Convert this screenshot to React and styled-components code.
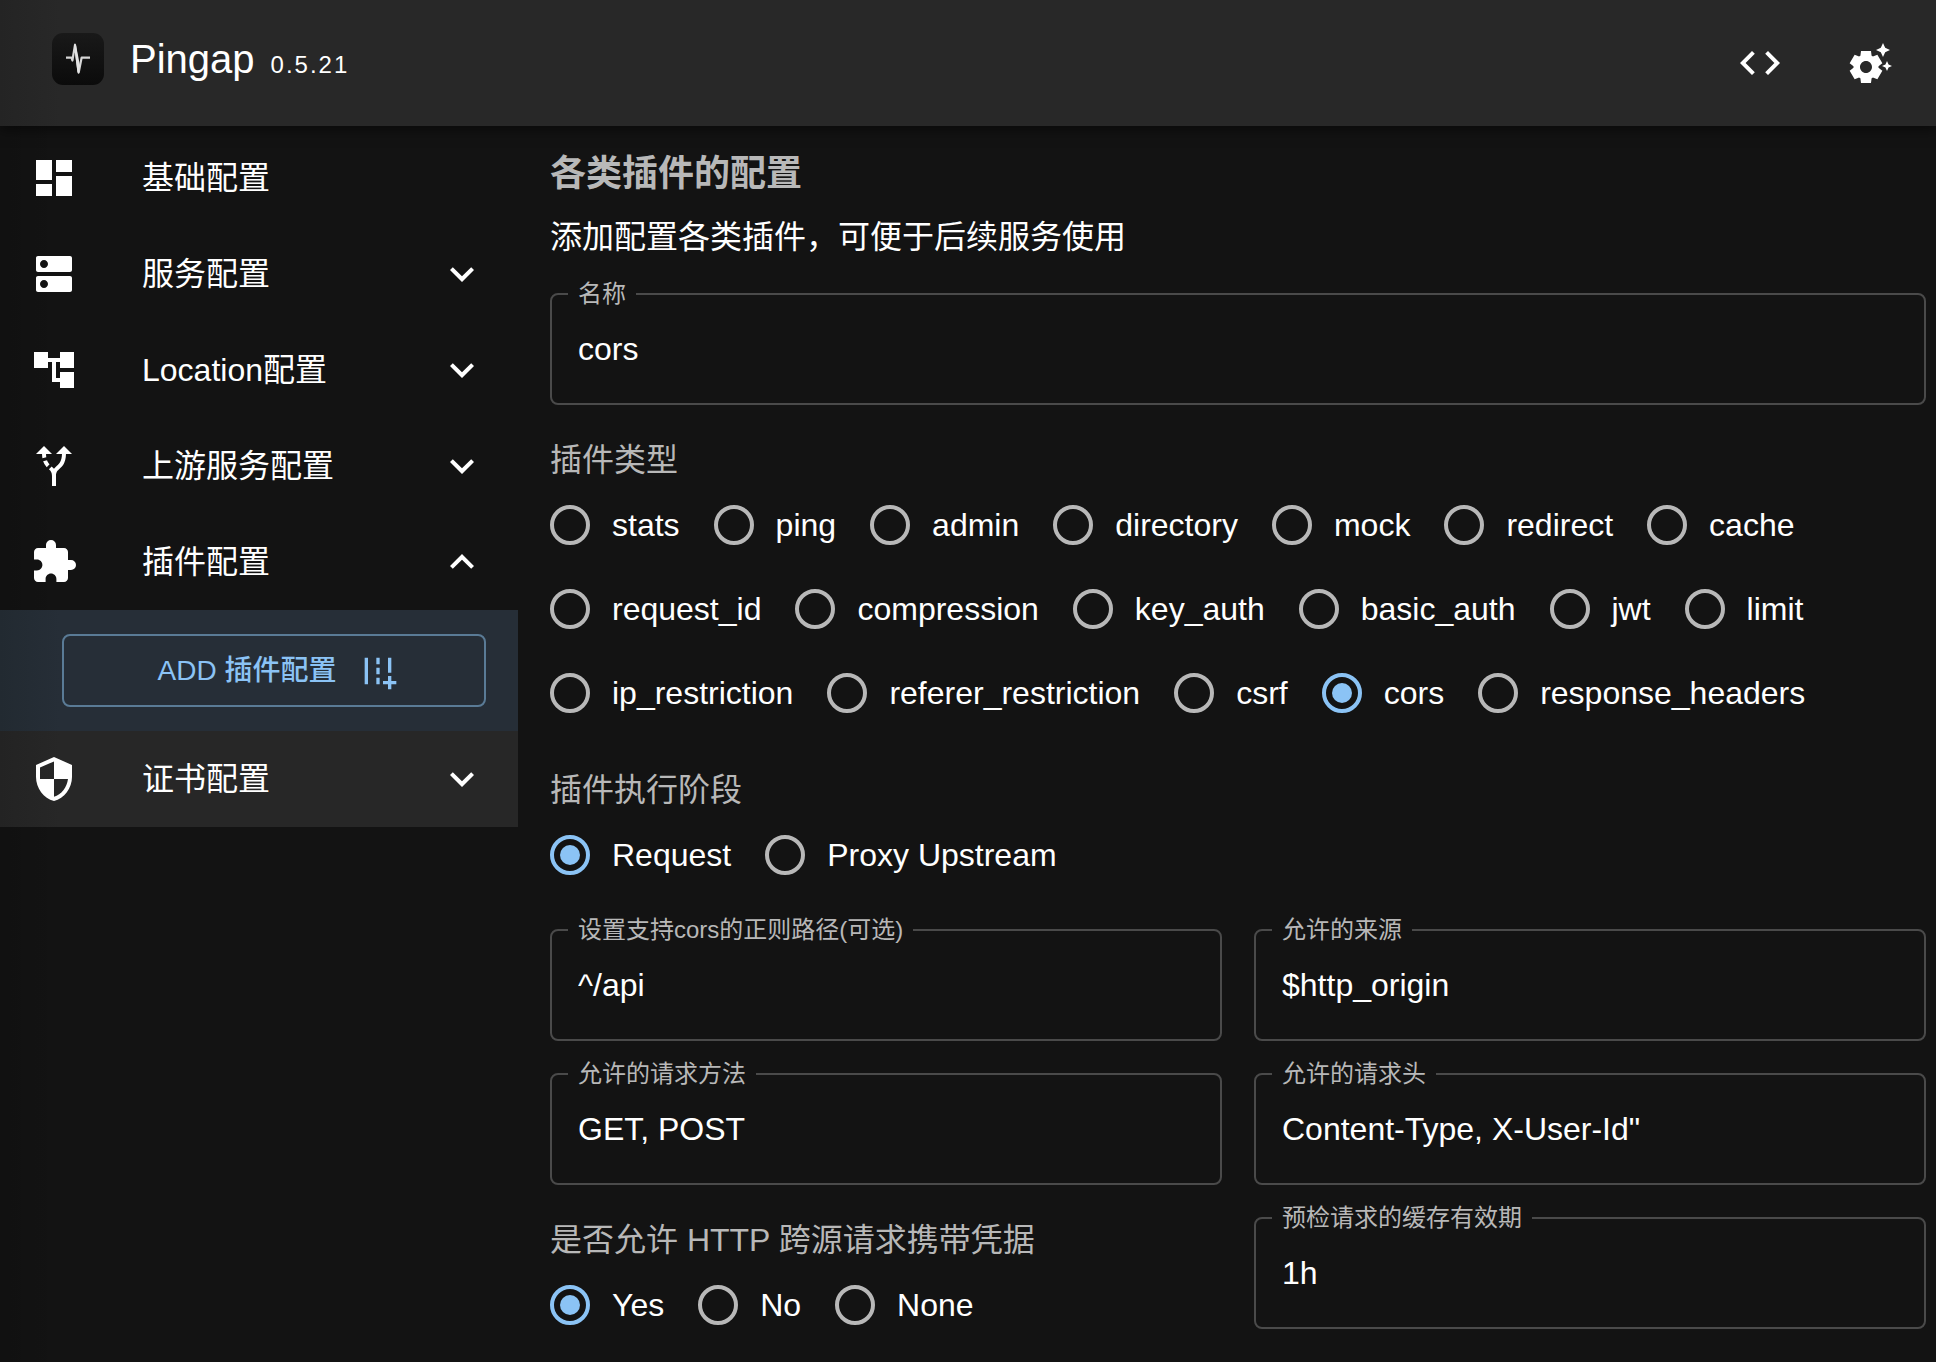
import React, { useState } from "react";
import styled, { createGlobalStyle } from "styled-components";
import {
  MdAccountTree,
  MdAddRoad,
  MdAltRoute,
  MdCode,
  MdDashboard,
  MdDns,
  MdExpandLess,
  MdExpandMore,
  MdExtension,
  MdSecurity,
  MdSettingsSuggest,
} from "react-icons/md";

const GlobalStyle = createGlobalStyle`
  * {
    box-sizing: border-box;
  }
  body {
    margin: 0;
    background: #131313;
    color: #fff;
    font-family: "Liberation Sans", "Noto Sans CJK SC", sans-serif;
    font-size: 32px;
  }
  button,
  input {
    font: inherit;
    color: inherit;
  }
`;

const Page = styled.div`
  min-height: 100vh;
  background: linear-gradient(to right, rgba(0, 0, 0, 0.12), transparent 60px);
`;

const Header = styled.header`
  display: flex;
  align-items: center;
  height: 126px;
  padding: 0 18px 0 52px;
  background: linear-gradient(to right, #242424, #282828 60px);
  box-shadow: 0 4px 12px rgba(0, 0, 0, 0.5);
`;

const Brand = styled.div`
  display: flex;
  flex: 1;
  align-items: center;
  gap: 26px;
  padding-bottom: 8px;
`;

const Logo = styled.svg`
  width: 52px;
  height: 52px;
`;

const Title = styled.h1`
  display: flex;
  align-items: baseline;
  gap: 16px;
  margin: 0;
  padding-top: 6px;
  font-size: 40px;
  font-weight: 400;
  line-height: 52px;
`;

const Version = styled.span`
  font-size: 24px;
  letter-spacing: 2px;
`;

const IconButton = styled.button`
  display: flex;
  margin-left: 14px;
  padding: 24px;
  border: 0;
  background: none;
  cursor: pointer;

  svg {
    width: 48px;
    height: 48px;
  }
`;

const Layout = styled.div`
  display: flex;
  align-items: flex-start;
`;

const Sidebar = styled.nav`
  flex: 0 0 518px;
  padding-top: 4px;
`;

const MenuItem = styled.button`
  display: flex;
  align-items: center;
  width: 100%;
  height: 96px;
  padding: 0 32px 0 30px;
  border: 0;
  background: ${(props) =>
    props.$hover
      ? "linear-gradient(to right, #232323, #272727 60px)"
      : "transparent"};
  text-align: left;
  cursor: pointer;

  svg {
    flex: none;
    width: 48px;
    height: 48px;
  }
`;

const MenuText = styled.span`
  flex: 1;
  padding-left: 64px;
  line-height: 48px;
`;

const SubMenu = styled.div`
  padding: 24px 32px 24px 62px;
  background: linear-gradient(to right, #222a31, #262e37 60px);
`;

const AddButton = styled.button`
  display: flex;
  align-items: center;
  justify-content: center;
  width: 100%;
  height: 73px;
  border: 2px solid #5a7b96;
  border-radius: 8px;
  background: none;
  color: #8bc3f5;
  font-size: 28px;
  font-weight: 500;
  line-height: 48px;
  cursor: pointer;

  svg {
    width: 40px;
    height: 40px;
    margin: 0 -8px 0 22px;
  }
`;

const Main = styled.main`
  flex: 1;
  min-width: 0;
  padding: 21px 10px 12px 32px;
`;

const Heading = styled.h2`
  margin: 0;
  color: #b8b8b8;
  font-size: 36px;
  line-height: 54px;
`;

const Description = styled.p`
  margin: 12px 0 32px;
  line-height: 48px;
`;

const Form = styled.form`
  display: grid;
  grid-template-columns: 1fr 1fr;
  gap: 32px;
`;

/* half of the legend stands above the outline, so pull the box up by it */
const FieldBox = styled.fieldset`
  min-width: 0;
  height: 124px;
  margin: -12px 0 0;
  padding: 0 26px;
  border: 2px solid #4a4a4a;
  border-radius: 8px;
  grid-column: ${(props) => (props.$wide ? "1 / -1" : "auto")};
`;

const Legend = styled.legend`
  margin-left: -10px;
  padding: 0 10px;
  color: #b8b8b8;
  font-size: 24px;
  line-height: 26px;
`;

const Input = styled.input`
  display: block;
  width: 100%;
  height: 84px;
  padding: 0;
  border: 0;
  outline: 0;
  background: none;
`;

const RadioGroup = styled.div`
  grid-column: ${(props) => (props.$wide ? "1 / -1" : "auto")};
`;

const GroupLabel = styled.div`
  color: #b8b8b8;
  line-height: 46px;
`;

const RadioRow = styled.div`
  display: flex;
  flex-wrap: wrap;
  column-gap: 34px;
`;

const RadioLabel = styled.label`
  display: flex;
  align-items: center;
  gap: 22px;
  height: 84px;
  cursor: pointer;
`;

const Radio = styled.input`
  appearance: none;
  display: grid;
  place-items: center;
  width: 40px;
  height: 40px;
  margin: 0;
  border: 4px solid #b8b8b8;
  border-radius: 50%;

  &:checked {
    border-color: #8bc3f5;
  }
  &:checked::before {
    content: "";
    width: 20px;
    height: 20px;
    border-radius: 50%;
    background: #8bc3f5;
  }
`;

const menus = [
  { text: "基础配置", icon: MdDashboard },
  { text: "服务配置", icon: MdDns, expandable: true },
  { text: "Location配置", icon: MdAccountTree, expandable: true },
  { text: "上游服务配置", icon: MdAltRoute, expandable: true },
  { text: "插件配置", icon: MdExtension, expandable: true, open: true },
  { text: "证书配置", icon: MdSecurity, expandable: true, hover: true },
];

const pluginTypes = [
  "stats",
  "ping",
  "admin",
  "directory",
  "mock",
  "redirect",
  "cache",
  "request_id",
  "compression",
  "key_auth",
  "basic_auth",
  "jwt",
  "limit",
  "ip_restriction",
  "referer_restriction",
  "csrf",
  "cors",
  "response_headers",
];

function Field({ id, label, value, wide }) {
  return (
    <FieldBox $wide={wide}>
      <Legend>
        <label htmlFor={id}>{label}</label>
      </Legend>
      <Input id={id} type="text" defaultValue={value} />
    </FieldBox>
  );
}

function Radios({ name, label, options, initial, wide }) {
  const [value, setValue] = useState(initial);
  return (
    <RadioGroup role="radiogroup" aria-labelledby={name} $wide={wide}>
      <GroupLabel id={name}>{label}</GroupLabel>
      <RadioRow>
        {options.map((option) => (
          <RadioLabel key={option}>
            <Radio
              type="radio"
              name={name}
              value={option}
              checked={value === option}
              onChange={() => setValue(option)}
            />
            {option}
          </RadioLabel>
        ))}
      </RadioRow>
    </RadioGroup>
  );
}

function PingapLogo() {
  return (
    <Logo viewBox="0 0 52 52" aria-hidden="true">
      <defs>
        <linearGradient id="logo-bg" x1="0" y1="0" x2="0" y2="1">
          <stop offset="0" stopColor="#191919" />
          <stop offset="1" stopColor="#0b0b0b" />
        </linearGradient>
      </defs>
      <rect width="52" height="52" rx="11" fill="url(#logo-bg)" />
      <path
        d="M14 24.7H19.5L20.4 27.5L23 12L26.7 39.5L29.6 24.7H38"
        fill="none"
        stroke="#d6d6d6"
        strokeWidth="2.2"
        strokeLinejoin="round"
      />
      <path d="M22 12L23 10L24.2 13L28 33L26.7 41L25.4 39Z" fill="#e4e4e4" />
    </Logo>
  );
}

export default function App() {
  return (
    <>
      <GlobalStyle />
      <Page>
        <Header>
          <Brand>
            <PingapLogo />
            <Title>
              Pingap
              <Version>0.5.21</Version>
            </Title>
          </Brand>
          <IconButton type="button" aria-label="code">
            <MdCode />
          </IconButton>
          <IconButton type="button" aria-label="settings">
            <MdSettingsSuggest />
          </IconButton>
        </Header>
        <Layout>
          <Sidebar>
            {menus.map(({ text, icon: Icon, expandable, open, hover }) => (
              <React.Fragment key={text}>
                <MenuItem type="button" $hover={hover}>
                  <Icon />
                  <MenuText>{text}</MenuText>
                  {expandable && (open ? <MdExpandLess /> : <MdExpandMore />)}
                </MenuItem>
                {open && (
                  <SubMenu>
                    <AddButton type="button">
                      ADD {text}
                      <MdAddRoad />
                    </AddButton>
                  </SubMenu>
                )}
              </React.Fragment>
            ))}
          </Sidebar>
          <Main>
            <Heading>各类插件的配置</Heading>
            <Description>添加配置各类插件，可便于后续服务使用</Description>
            <Form>
              <Field id="name" label="名称" value="cors" wide />
              <Radios
                name="category"
                label="插件类型"
                options={pluginTypes}
                initial="cors"
                wide
              />
              <Radios
                name="step"
                label="插件执行阶段"
                options={["Request", "Proxy Upstream"]}
                initial="Request"
                wide
              />
              <Field
                id="path"
                label="设置支持cors的正则路径(可选)"
                value="^/api"
              />
              <Field id="origin" label="允许的来源" value="$http_origin" />
              <Field id="methods" label="允许的请求方法" value="GET, POST" />
              <Field
                id="headers"
                label="允许的请求头"
                value={'Content-Type, X-User-Id"'}
              />
              <Radios
                name="credentials"
                label="是否允许 HTTP 跨源请求携带凭据"
                options={["Yes", "No", "None"]}
                initial="Yes"
              />
              <Field id="max-age" label="预检请求的缓存有效期" value="1h" />
            </Form>
          </Main>
        </Layout>
      </Page>
    </>
  );
}
